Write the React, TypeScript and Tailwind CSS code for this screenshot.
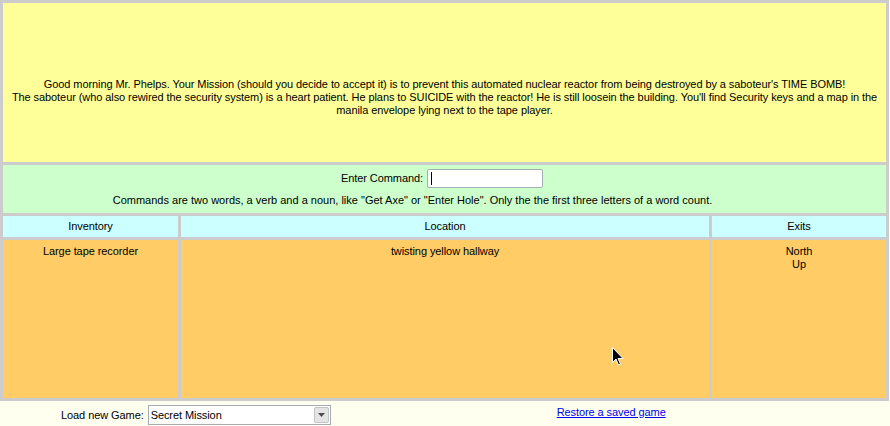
export default function App() {
  return (
    <div className="w-[890px] h-[426px] bg-[#fffff0] text-black text-[11px] leading-[13px] tracking-[-0.08px] relative overflow-hidden" style={{ fontFamily: '"Liberation Sans", Arial, sans-serif' }}>
      <div className="w-[889px] bg-[#cccccc] p-[3px] flex flex-col gap-[3px]">
        <div className="h-[159px] bg-[#ffff99] text-center px-[4px] pt-[75px]">
          Good morning Mr. Phelps. Your Mission (should you decide to accept it) is to prevent this automated nuclear reactor from being destroyed by a saboteur's TIME BOMB!
          <br />
          The saboteur (who also rewired the security system) is a heart patient. He plans to SUICIDE with the reactor! He is still loosein the building. You'll find Security keys and a map in the manila envelope lying next to the tape player.
        </div>
        <div className="h-[48px] bg-[#ccffcc] text-center pt-[4px]">
          <div className="flex items-center justify-center gap-[4px] h-[19px] pr-[5px]">
            <span>Enter Command:</span>
            <div className="w-[116px] h-[19px] bg-white border border-[#a5acb2] rounded-[2px] flex items-center pl-[3px]">
              <div className="w-[1px] h-[13px] bg-black" />
            </div>
          </div>
          <div className="mt-[6px] pr-[64px] tracking-[0px]">
            Commands are two words, a verb and a noun, like "Get Axe" or "Enter Hole". Only the the first three letters of a word count.
          </div>
        </div>
        <div className="grid grid-cols-[175px_528px_174px] gap-[3px]">
          <div className="h-[21px] bg-[#ccffff] flex items-center justify-center">Inventory</div>
          <div className="h-[21px] bg-[#ccffff] flex items-center justify-center">Location</div>
          <div className="h-[21px] bg-[#ccffff] flex items-center justify-center">Exits</div>
          <div className="h-[158px] bg-[#ffcc66] text-center pt-[5px]">Large tape recorder</div>
          <div className="h-[158px] bg-[#ffcc66] text-center pt-[5px]">twisting yellow hallway</div>
          <div className="h-[158px] bg-[#ffcc66] text-center pt-[5px]">
            North
            <br />
            Up
          </div>
        </div>
      </div>
      <div className="flex items-center h-[22px] mt-[3px]">
        <div className="pl-[61px] flex items-center gap-[4px]">
          <span>Load new Game:</span>
          <div className="w-[183px] h-[20px] bg-white border border-[#a5acb2] flex items-center justify-between">
            <span className="pl-[2px]">Secret Mission</span>
            <div className="w-[15px] h-[16px] mr-[1px] bg-[#e4e4e4] border border-[#c4c4c4] rounded-[2px] flex items-center justify-center">
              <svg width="7" height="4" viewBox="0 0 7 4"><path d="M0 0h7L3.5 4z" fill="#4d4d4d" /></svg>
            </div>
          </div>
        </div>
        <a href="#" className="ml-[226px] text-[#0000ee] underline -mt-[6px]">Restore a saved game</a>
      </div>
      <svg className="absolute left-[612px] top-[347px]" width="12" height="20" viewBox="0 0 12 20">
        <path d="M0.5 0.5 L0.5 15.5 L4 12 L6.5 18 L8.5 17 L6 11.5 L11 11.5 Z" fill="black" stroke="white" strokeWidth="1" />
      </svg>
    </div>
  )
}
